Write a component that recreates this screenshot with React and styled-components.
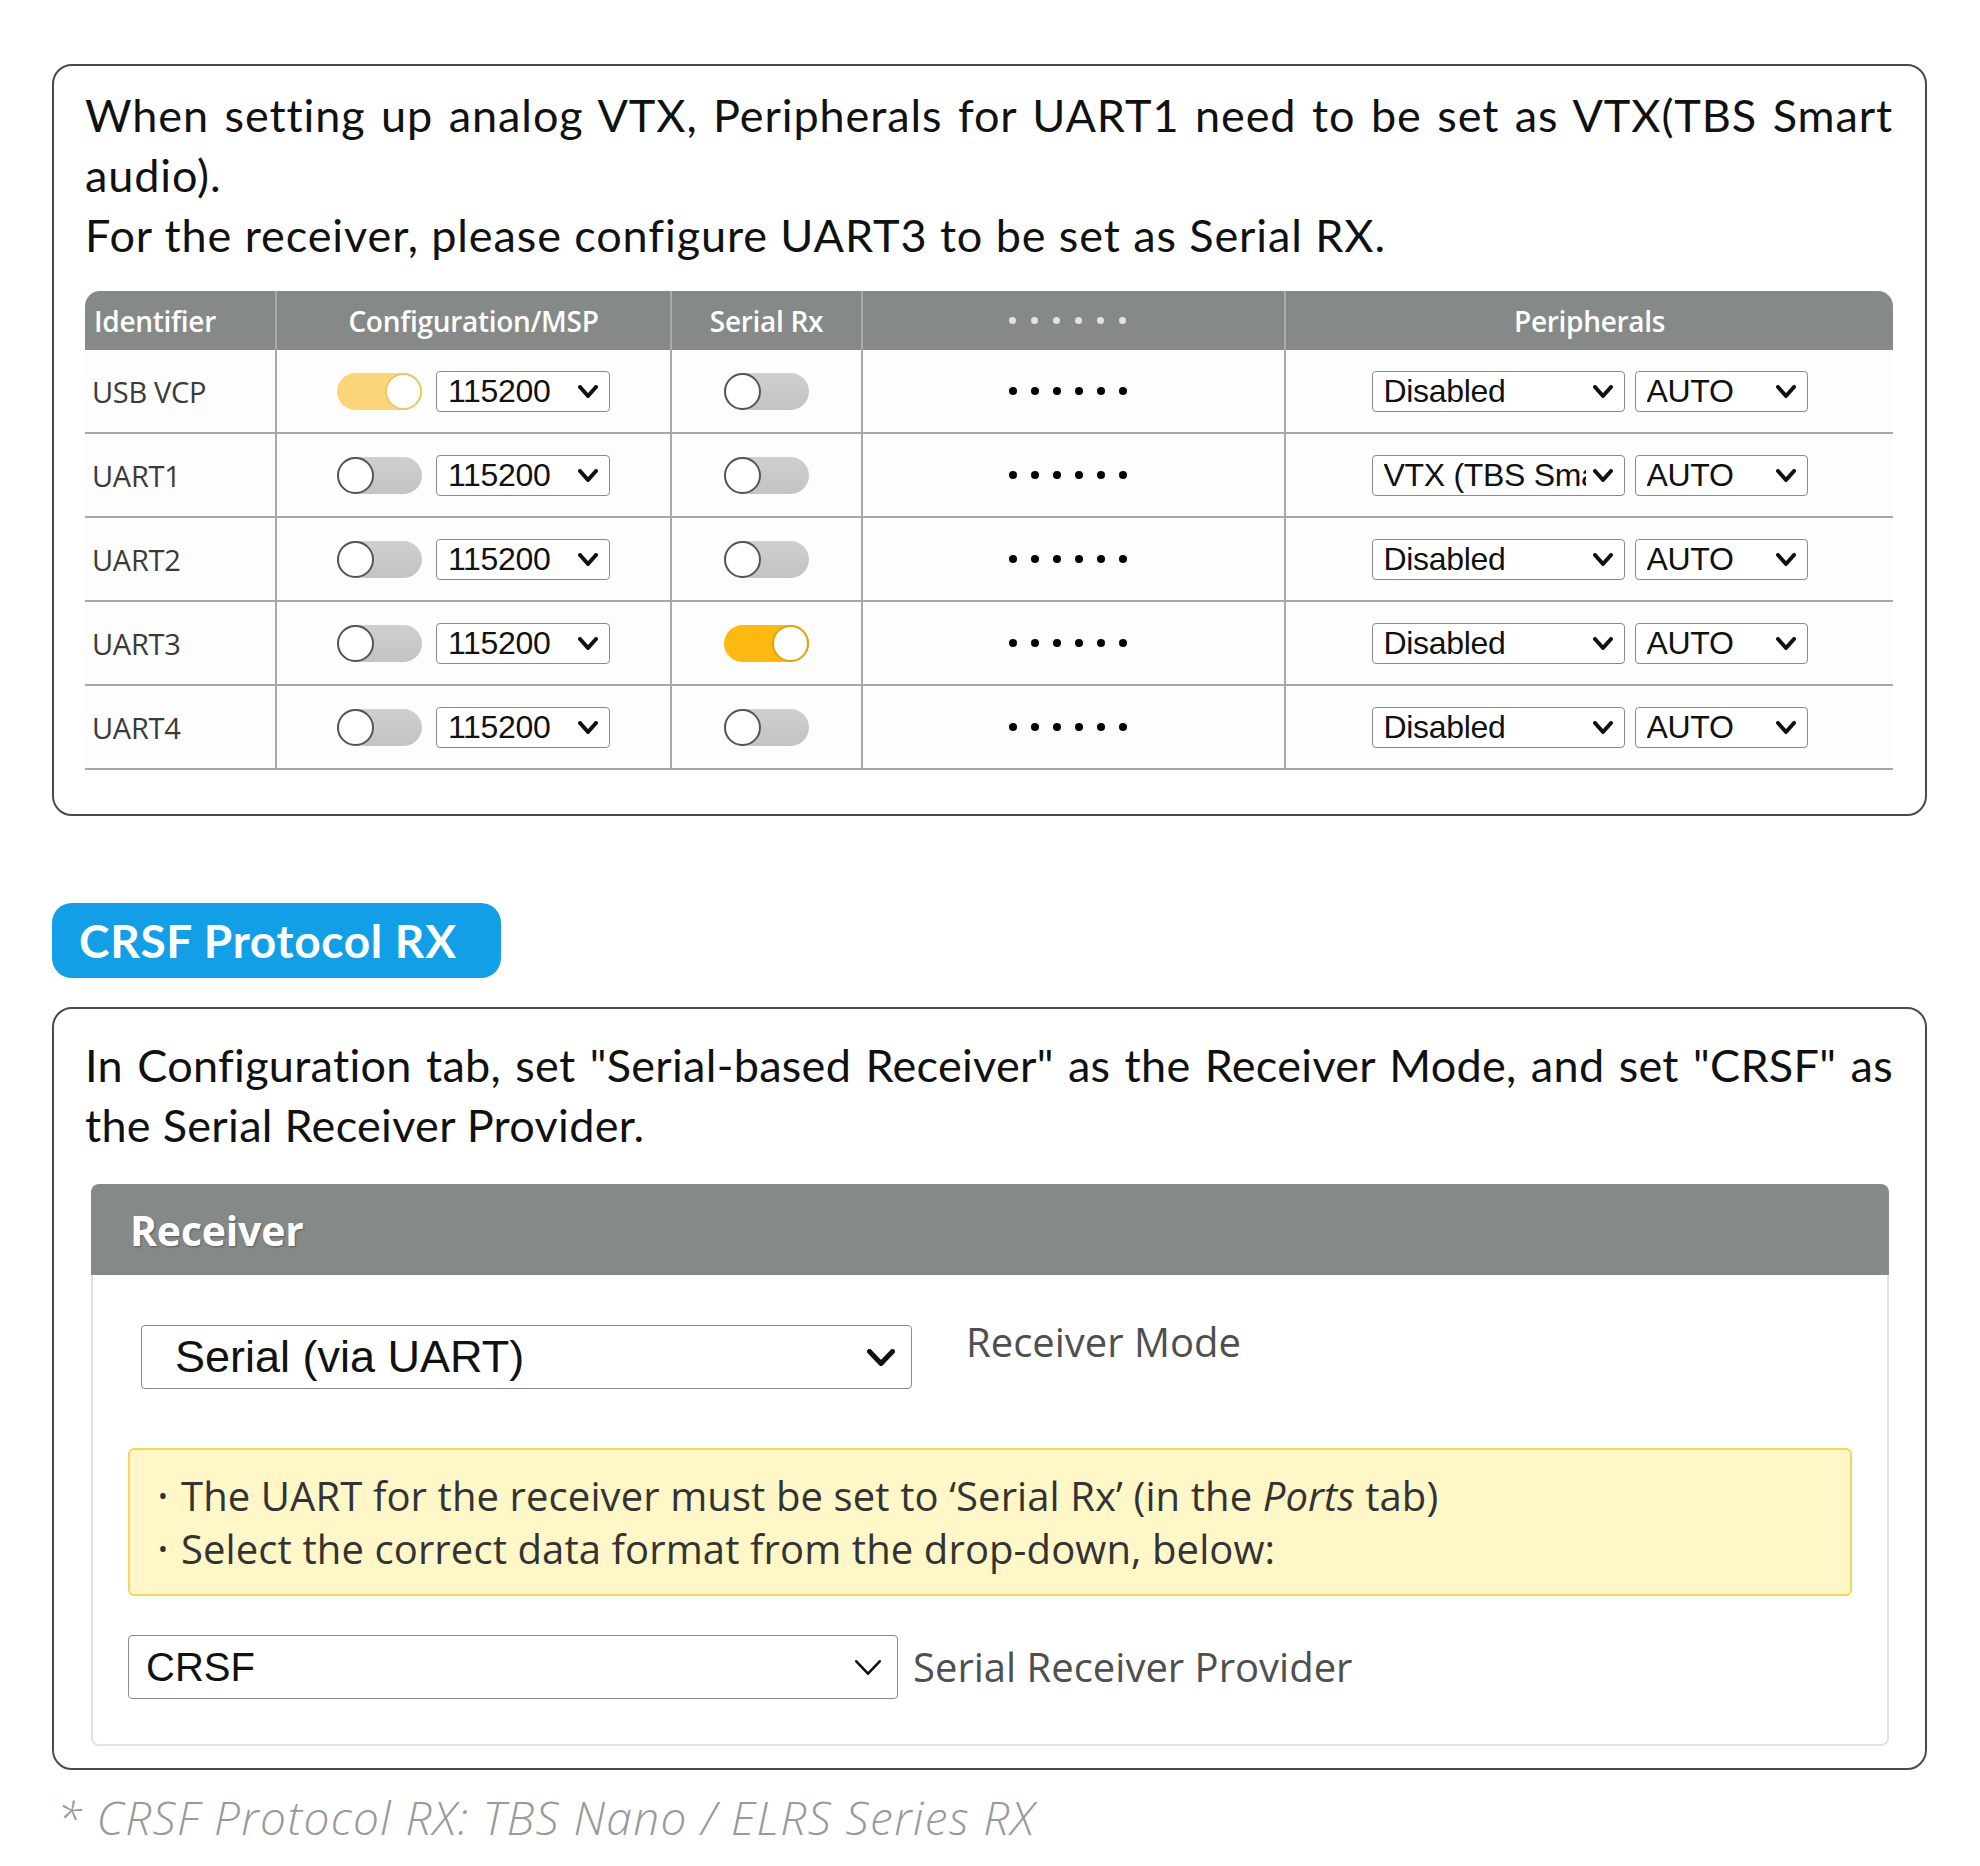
import React from 'react';
import styled, { createGlobalStyle } from 'styled-components';

const GlobalStyle = createGlobalStyle`
  body {
    margin: 0;
    background: #fff;
  }
`;

const Page = styled.div`
  width: 1875px;
  padding: 64px 0 40px 52px;
  font-family: Lato, "Noto Sans", sans-serif;
  color: #111;
`;

const Card = styled.section`
  box-sizing: border-box;
  border: 2px solid #4a4a4a;
  border-radius: 20px;
  padding: ${p => p.$pad};
`;

const Lead = styled.p`
  margin: 0;
  font-size: 45px;
  line-height: 60px;
  letter-spacing: ${p => p.$ls}px;
  text-align: justify;
  color: #111;
`;

// ports table
const PortsTable = styled.div`
  margin-top: 26px;
  display: grid;
  grid-template-columns: 190px 395px 191px 423px 1fr;
`;

const HeadCell = styled.div`
  box-sizing: border-box;
  height: 59px;
  display: flex;
  align-items: center;
  justify-content: ${p => (p.$left ? 'flex-start' : 'center')};
  padding-left: ${p => (p.$left ? '9px' : '0')};
  background: #858a88;
  color: #fff;
  font-family: "Open Sans", sans-serif;
  font-weight: 600;
  font-size: 28px;
  font-stretch: 92%;
  letter-spacing: -0.3px;
  border-left: ${p => (p.$left ? 'none' : '2px solid #a9acab')};
  border-top-left-radius: ${p => (p.$left ? '15px' : '0')};
  border-top-right-radius: ${p => (p.$last ? '15px' : '0')};
`;

const Cell = styled.div`
  box-sizing: border-box;
  height: 84px;
  display: flex;
  align-items: center;
  justify-content: ${p => (p.$left ? 'flex-start' : 'center')};
  gap: ${p => p.$gap || 0}px;
  padding-left: ${p => (p.$left ? '7px' : '0')};
  border-bottom: 2px solid #a8a8a8;
  border-left: ${p => (p.$left ? 'none' : '2px solid #a8a8a8')};
  background: #fdfdfd;
  font-family: "Open Sans", sans-serif;
  font-size: 29px;
  font-stretch: 94%;
  letter-spacing: -0.3px;
  color: #3a3a3a;
`;

const Switch = styled.span`
  position: relative;
  display: inline-block;
  width: 85px;
  height: 37px;
  border-radius: 19px;
  background: ${p => (p.$on ? p.$color : 'linear-gradient(#cfcfcf, #c3c3c3)')};

  &::after {
    content: '';
    position: absolute;
    top: 0;
    left: ${p => (p.$on ? '48px' : '0')};
    width: 37px;
    height: 37px;
    box-sizing: border-box;
    border-radius: 50%;
    background: #fff;
    border: 2px solid ${p => (p.$on ? p.$ring : '#555')};
  }
`;

const SelectBox = styled.div`
  box-sizing: border-box;
  display: flex;
  align-items: center;
  gap: 7px;
  width: ${p => p.$w}px;
  height: ${p => p.$h}px;
  padding: 0 ${p => p.$pr}px 0 ${p => p.$pl}px;
  border: 1.5px solid #8a8a8a;
  border-radius: 4px;
  background: #fff;
  font-family: "Liberation Sans", Arial, sans-serif;
  font-size: ${p => p.$fs}px;
  color: #111;
  flex-shrink: 0;
`;

const SelectText = styled.span`
  flex: 1;
  min-width: 0;
  overflow: hidden;
  white-space: nowrap;
`;

const Dots = styled.div`
  display: flex;
  gap: ${p => p.$gap}px;
  margin-left: -12px;
`;

const Dot = styled.span`
  width: ${p => p.$size}px;
  height: ${p => p.$size}px;
  border-radius: 50%;
  background: ${p => p.$color};
`;

// crsf section
const Pill = styled.div`
  box-sizing: border-box;
  width: 449px;
  height: 75px;
  margin: 87px 0 29px;
  padding-left: 27px;
  display: flex;
  align-items: center;
  border-radius: 20px;
  background: #129fe7;
  color: #fff;
  font-weight: 700;
  font-size: 46px;
  letter-spacing: 0.7px;
`;

const Panel = styled.div`
  margin: 29px 4px 0 6px;
`;

const PanelHead = styled.div`
  height: 91px;
  display: flex;
  align-items: center;
  padding-left: 39px;
  background: #858a88;
  border-radius: 8px 8px 0 0;
  color: #fff;
  font-family: "Open Sans", sans-serif;
  font-weight: 700;
  font-size: 41px;
  font-stretch: 94%;
  letter-spacing: -0.2px;
  text-shadow: 1px 1px 2px rgba(0, 0, 0, 0.35);
`;

const PanelBody = styled.div`
  padding: 50px 35px 45px 35px;
  border: 2px solid #e2e2e2;
  border-top: none;
  border-radius: 0 0 8px 8px;
`;

const FieldRow = styled.div`
  display: flex;
  align-items: ${p => (p.$top ? 'flex-start' : 'center')};
  margin-left: ${p => p.$indent || 0}px;
  margin-top: ${p => p.$mt || 0}px;
`;

const FieldLabel = styled.span`
  margin-left: ${p => p.$ml}px;
  margin-top: ${p => p.$mt || 0}px;
  font-family: "Open Sans", sans-serif;
  font-size: 40px;
  line-height: 44px;
  color: #4f4f4f;
`;

const Note = styled.ul`
  margin: 59px 0 0;
  padding: 19px 20px 19px 28px;
  list-style: none;
  background: #fff7c7;
  border: 2px solid #f6d55a;
  border-radius: 6px;
  font-family: "Open Sans", sans-serif;
  font-size: 40px;
  line-height: 53px;
  color: #333;
  letter-spacing: 0.1px;

  li {
    display: flex;
  }

  li::before {
    content: '•';
    width: 23px;
    flex-shrink: 0;
    font-size: 26px;
  }
`;

const Footnote = styled.p`
  margin: 17px 0 0 5px;
  font-family: "Open Sans", sans-serif;
  font-style: italic;
  font-weight: 300;
  font-size: 46px;
  line-height: 60px;
  letter-spacing: 1.4px;
  color: #999;
`;

const Chevron = ({ w = 20, h = 13, sw = 4 }) => (
  <svg width={w} height={h} viewBox={`0 0 ${w} ${h}`} style={{ flexShrink: 0 }}>
    <polyline
      points={`${sw / 2},${sw / 2} ${w / 2},${h - sw / 2} ${w - sw / 2},${sw / 2}`}
      fill="none"
      stroke="#111"
      strokeWidth={sw}
      strokeLinecap="round"
      strokeLinejoin="round"
    />
  </svg>
);

const Select = ({ value, w, h = 41, fs = 32, pl = 11, pr = 11, chevron }) => (
  <SelectBox $w={w} $h={h} $fs={fs} $pl={pl} $pr={pr}>
    <SelectText>{value}</SelectText>
    <Chevron {...chevron} />
  </SelectBox>
);

const DotRow = ({ light }) => (
  <Dots $gap={light ? 15 : 14}>
    {[0, 1, 2, 3, 4, 5].map(i => (
      <Dot key={i} $size={light ? 7 : 8} $color={light ? '#e2e2e2' : '#000'} />
    ))}
  </Dots>
);

const ports = [
  { id: 'USB VCP', msp: true, rx: false, periph: 'Disabled' },
  { id: 'UART1', msp: false, rx: false, periph: 'VTX (TBS Smart Audio)' },
  { id: 'UART2', msp: false, rx: false, periph: 'Disabled' },
  { id: 'UART3', msp: false, rx: true, periph: 'Disabled' },
  { id: 'UART4', msp: false, rx: false, periph: 'Disabled' },
];

const App = () => (
  <Page>
    <GlobalStyle />
    <Card $pad="19px 32px 44px 31px">
      <Lead $ls={0.9}>
        When setting up analog VTX, Peripherals for UART1 need to be set as VTX(TBS Smart audio).
        <br />
        For the receiver, please configure UART3 to be set as Serial RX.
      </Lead>
      <PortsTable>
        <HeadCell $left>Identifier</HeadCell>
        <HeadCell>Configuration/MSP</HeadCell>
        <HeadCell>Serial Rx</HeadCell>
        <HeadCell><DotRow light /></HeadCell>
        <HeadCell $last>Peripherals</HeadCell>
        {ports.map(p => (
          <React.Fragment key={p.id}>
            <Cell $left>{p.id}</Cell>
            <Cell $gap={14}>
              <Switch $on={p.msp} $color="#fcd57a" $ring="#f0c65e" />
              <Select value="115200" w={174} />
            </Cell>
            <Cell>
              <Switch $on={p.rx} $color="#fdb912" $ring="#e2a40c" />
            </Cell>
            <Cell><DotRow /></Cell>
            <Cell $gap={10}>
              <Select value={p.periph} w={253} />
              <Select value="AUTO" w={173} />
            </Cell>
          </React.Fragment>
        ))}
      </PortsTable>
    </Card>

    <Pill>CRSF Protocol RX</Pill>

    <Card $pad="26px 32px 22px 31px">
      <Lead $ls={0.3}>
        In Configuration tab, set "Serial-based Receiver" as the Receiver Mode, and set "CRSF" as the Serial Receiver Provider.
      </Lead>
      <Panel>
        <PanelHead>Receiver</PanelHead>
        <PanelBody>
          <FieldRow $top $indent={13}>
            <Select
              value="Serial (via UART)"
              w={771}
              h={64}
              fs={45}
              pl={33}
              pr={16}
              chevron={{ w: 28, h: 17, sw: 5 }}
            />
            <FieldLabel $ml={54} $mt={-5}>Receiver Mode</FieldLabel>
          </FieldRow>
          <Note>
            <li>The UART for the receiver must be set to ‘Serial Rx’ (in the&nbsp;<i>Ports</i>&nbsp;tab)</li>
            <li>Select the correct data format from the drop-down, below:</li>
          </Note>
          <FieldRow $mt={39}>
            <Select
              value="CRSF"
              w={770}
              h={64}
              fs={40}
              pl={17}
              pr={16}
              chevron={{ w: 26, h: 15, sw: 2.6 }}
            />
            <FieldLabel $ml={15}>Serial Receiver Provider</FieldLabel>
          </FieldRow>
        </PanelBody>
      </Panel>
    </Card>

    <Footnote>* CRSF Protocol RX: TBS Nano / ELRS Series RX</Footnote>
  </Page>
);

export default App;
